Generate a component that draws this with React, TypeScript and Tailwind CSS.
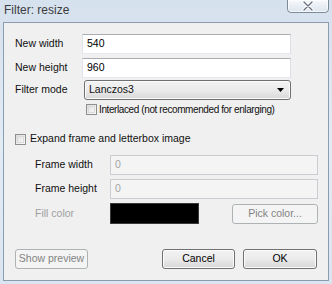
import React from "react"

const font = { fontFamily: '"Liberation Sans", Arial, sans-serif' }

const TextBox: React.FC<{ value: string; disabled?: boolean; className?: string }> = ({ value, disabled, className }) => (
  <div
    className={
      "h-[20px] flex items-center px-[4px] border text-[10.5px] " +
      (disabled
        ? "bg-[#f4f4f4] border-[#c9cdd2] text-[#a3a3a3] "
        : "bg-white border-[#abadb3] border-r-[#dbdfe6] border-b-[#e3e9ef] border-l-[#e2e3ea] text-black ") +
      (className ?? "")
    }
  >
    {value}
  </div>
)

const Checkbox: React.FC = () => (
  <div className="w-[11px] h-[11px] border border-[#8e8f8f] bg-gradient-to-br from-[#dcdcdc] to-[#fbfbfb] p-[1px] shrink-0">
    <div className="w-full h-full border border-[#d9dadb] bg-gradient-to-br from-[#e2e2e2] to-[#f7f7f7]" />
  </div>
)

const Button: React.FC<{ label: string; disabled?: boolean; className?: string }> = ({ label, disabled, className }) => (
  <div
    className={
      "h-[20px] flex items-center justify-center rounded-[3px] border text-[10.5px] " +
      (disabled
        ? "border-[#adb2b5] bg-[#f4f4f4] text-[#838383] "
        : "border-[#707070] bg-gradient-to-b from-[#f2f2f2] via-[#ebebeb] to-[#d6d6d6] text-black shadow-[inset_0_0_0_1px_#fcfcfc] ") +
      (className ?? "")
    }
  >
    {label}
  </div>
)

export default function App() {
  return (
    <div
      className="w-[332px] h-[284px] bg-gradient-to-b from-[#d6e1ee] via-[#e3ebf5] to-[#dbe5f1] flex flex-col overflow-hidden"
      style={font}
    >
      {/* title bar */}
      <div className="h-[22px] flex items-start justify-between shrink-0">
        <div className="pl-[4px] pt-[1px] text-[12px] text-[#3c3c3c]">Filter: resize</div>
        <div className="mr-[3px] mt-[-1px] w-[42px] h-[14px] rounded-b-[4px] border border-[#7d8a99] bg-gradient-to-b from-[#f6f8fb] to-[#dde5ee] flex items-center justify-center shadow-[inset_0_0_0_1px_#ffffffaa]">
          <svg width="12" height="10" viewBox="0 0 12 10">
            <path d="M2 1 L10 9 M10 1 L2 9" stroke="#ffffff" strokeWidth="3.2" strokeLinecap="round" />
            <path d="M2 1 L10 9 M10 1 L2 9" stroke="#6d7380" strokeWidth="1.4" strokeLinecap="round" />
          </svg>
        </div>
      </div>

      {/* client area */}
      <div className="mx-[3px] mb-[3px] flex-1 bg-[#f0f0f0] border border-[#8c9cb0] text-[10.5px] text-[#111] flex flex-col">
        <div className="pl-[11px] pr-[37px] pt-[11px] flex flex-col">
          <div className="flex items-center h-[20px]">
            <div className="w-[67px]">New width</div>
            <TextBox value="540" className="flex-1" />
          </div>
          <div className="flex items-center h-[20px] mt-[4px]">
            <div className="w-[67px]">New height</div>
            <TextBox value="960" className="flex-1" />
          </div>
          <div className="flex items-center h-[20px] mt-[2px]">
            <div className="w-[69px]">Filter mode</div>
            <div className="flex-1 h-[20px] rounded-[3px] border border-[#707070] bg-gradient-to-b from-[#f2f2f2] via-[#ebebeb] to-[#d8d8d8] flex items-center justify-between pl-[4px] pr-[6px] shadow-[inset_0_0_0_1px_#fbfbfb]">
              <span>Lanczos3</span>
              <svg width="7" height="4" viewBox="0 0 7 4">
                <path d="M0 0 L7 0 L3.5 4 Z" fill="#000" />
              </svg>
            </div>
          </div>
          <div className="flex items-center mt-[3px] ml-[71px] gap-[2px] h-[12px] whitespace-nowrap">
            <Checkbox />
            <span className="text-[10px] tracking-[-0.4px]">Interlaced (not recommended for enlarging)</span>
          </div>
        </div>

        <div className="flex items-center mt-[18px] ml-[11px] gap-[4px] h-[12px] whitespace-nowrap">
          <Checkbox />
          <span>Expand frame and letterbox image</span>
        </div>

        <div className="pl-[31px] pr-[10px] pt-[10px] flex flex-col">
          <div className="flex items-center h-[20px]">
            <div className="w-[75px]">Frame width</div>
            <TextBox value="0" disabled className="flex-1" />
          </div>
          <div className="flex items-center h-[20px] mt-[4px]">
            <div className="w-[75px]">Frame height</div>
            <TextBox value="0" disabled className="flex-1" />
          </div>
          <div className="flex items-center h-[21px] mt-[4px]">
            <div className="w-[75px] text-[#a0a0a0]">Fill color</div>
            <div className="w-[89px] h-[21px] bg-black border border-[#3a3a3a]" />
            <div className="flex-1" />
            <Button label="Pick color..." disabled className="w-[86px]" />
          </div>
        </div>

        <div className="flex items-center pl-[11px] pr-[11px] mt-[25px]">
          <Button label="Show preview" disabled className="w-[73px]" />
          <div className="flex-1" />
          <Button label="Cancel" className="w-[73px]" />
          <Button label="OK" className="w-[74px] ml-[8px]" />
        </div>
      </div>
    </div>
  )
}
